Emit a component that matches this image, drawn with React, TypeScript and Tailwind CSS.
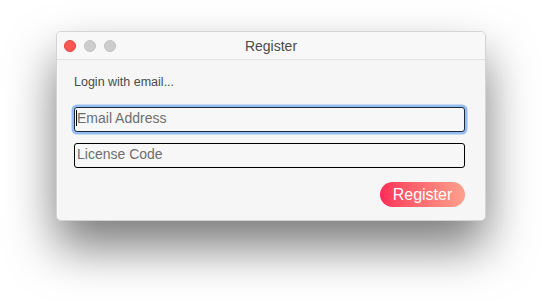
const font = { fontFamily: '"Liberation Sans", Arial, sans-serif' };

const TrafficLights = () => (
  <div className="flex items-center gap-[8px] pl-[7px]">
    <span className="block w-[12px] h-[12px] rounded-full bg-[#fc5753] border border-[#e0443e]" />
    <span className="block w-[12px] h-[12px] rounded-full bg-[#cdcdcd] border border-[#c2c2c2]" />
    <span className="block w-[12px] h-[12px] rounded-full bg-[#cdcdcd] border border-[#c2c2c2]" />
  </div>
);

const App = () => {
  return (
    <div className="w-[542px] h-[301px] bg-white pt-[31px] pl-[56px]" style={font}>
      <div className="w-[430px] h-[190px] rounded-[5px] bg-[#f6f6f6] border border-[#d4d4d4] shadow-[0_26px_48px_rgba(0,0,0,0.52)] flex flex-col overflow-hidden">
        {/* title bar */}
        <div className="grid grid-cols-[1fr_auto_1fr] items-center h-[28px] bg-[#f8f8f8] border-b border-[#e2e2e2]">
          <TrafficLights />
          <div className="text-[14px] text-[#4b4b4b] leading-[16px]">Register</div>
          <div />
        </div>

        {/* body */}
        <div className="flex flex-col pl-[17px] pr-[20px] pt-[15px]">
          <p className="text-[12.5px] leading-[15px] text-[#4a4a4a]">Login with email...</p>

          <div className="relative mt-[16px]">
            <input
              className="w-full h-[25px] rounded-[3px] border border-[#1d2a3a] bg-[#f7f7f7] pl-[2px] pb-[3px] text-[14px] text-[#333] placeholder:text-[#6e6e6e] outline-none shadow-[0_0_0_2.5px_#96bdf2]"
              placeholder="Email Address"
              style={font}
            />
            <span className="absolute left-[2px] top-[4px] w-px h-[16px] bg-black" />
          </div>

          <input
            className="mt-[11px] w-full h-[25px] rounded-[3px] border border-black bg-[#f7f7f7] pl-[2px] pb-[3px] text-[14px] text-[#333] placeholder:text-[#6e6e6e] outline-none"
            placeholder="License Code"
            style={font}
          />

          <div className="flex justify-end mt-[14px]">
            <button className="w-[85px] h-[25px] rounded-full bg-gradient-to-r from-[#fc2858] to-[#fe9f8c] text-white text-[16px] leading-[18px]">
              Register
            </button>
          </div>
        </div>
      </div>
    </div>
  );
};

export default App;
